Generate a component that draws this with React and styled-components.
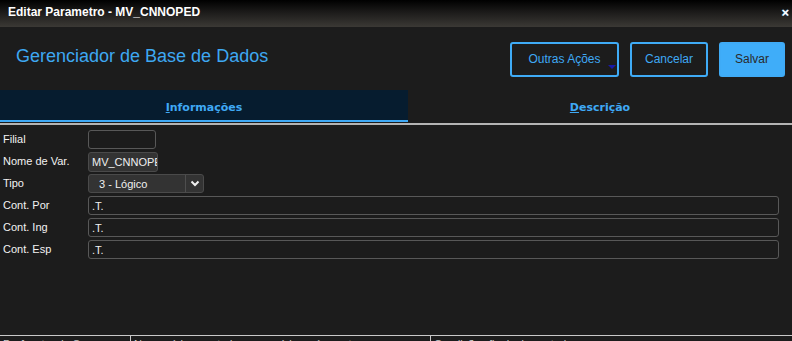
import React from "react";
import styled, { createGlobalStyle } from "styled-components";

const Global = createGlobalStyle`
  html, body { margin: 0; padding: 0; background: #1c1c1c; }
  body { font-family: "Liberation Sans", Arial, sans-serif; overflow: hidden; }
  * { box-sizing: border-box; }
`;

const Page = styled.div`
  width: 792px;
  height: 341px;
  display: flex;
  flex-direction: column;
  background: #1c1c1c;
  overflow: hidden;
`;

const Dialog = styled.div`
  height: 336px;
  display: flex;
  flex-direction: column;
  border-bottom: 1px solid #c8c8c8;
`;

const TitleBar = styled.div`
  height: 27px;
  display: flex;
  align-items: center;
  justify-content: space-between;
  padding: 0 3px 3px 8px;
  background: linear-gradient(#000 0%, #1c1b1a 45%, #3b3935 100%);
  color: #fff;
  font-weight: bold;
  font-size: 12px;
`;

const Close = styled.span`
  font-size: 13px;
  font-weight: bold;
  line-height: 1;
  color: #fff;
  text-shadow: 0 0 1px #3fa9f5;
`;

const Header = styled.div`
  height: 63px;
  display: flex;
  align-items: center;
  justify-content: space-between;
  padding: 0 7px 0 16px;
`;

const Heading = styled.h1`
  margin: 0 0 4px 0;
  font-weight: normal;
  font-size: 18px;
  color: #3ea8f2;
`;

const Actions = styled.div`
  display: flex;
  gap: 11px;
  margin-top: 1px;
`;

const Button = styled.button`
  position: relative;
  width: ${p => p.$w}px;
  height: 35px;
  padding: 0;
  border: 2px solid #3fabf6;
  border-radius: 3px;
  background: ${p => (p.$primary ? "#3fadf9" : "transparent")};
  color: ${p => (p.$primary ? "#2a2a2a" : "#3fa9f5")};
  font-family: "Liberation Sans", Arial, sans-serif;
  font-size: 12px;
  cursor: pointer;
`;

const Caret = styled.span`
  position: absolute;
  right: 1px;
  bottom: 6px;
  width: 0;
  height: 0;
  border-left: 4px solid transparent;
  border-right: 4px solid transparent;
  border-top: 4px solid #1818a8;
`;

const Tabs = styled.div`
  display: flex;
  border-bottom: 2px solid #b4b4b4;
  padding-bottom: 1px;
`;

const Tab = styled.div`
  flex: ${p => (p.$active ? "0 0 408px" : "1")};
  height: 32px;
  display: flex;
  align-items: center;
  justify-content: center;
  padding-top: 4px;
  background: ${p => (p.$active ? "#061c2f" : "transparent")};
  border-bottom: 2px solid ${p => (p.$active ? "#3fa9f5" : "transparent")};
  color: #3fa9f5;
  font-family: "DejaVu Sans", Verdana, sans-serif;
  font-weight: bold;
  font-size: 11px;
  & u { text-decoration: underline; }
`;

const Form = styled.div`
  display: flex;
  flex-direction: column;
  gap: 3px;
  padding: 5px 13px 0 3px;
`;

const Row = styled.div`
  display: flex;
  align-items: center;
  height: 19px;
`;

const Label = styled.label`
  width: 85px;
  margin-top: -1px;
  color: #f2f2f2;
  font-size: 11px;
`;

const Input = styled.div`
  width: ${p => p.$w ? `${p.$w}px` : "auto"};
  flex: ${p => (p.$w ? "none" : "1")};
  height: ${p => p.$h || 19}px;
  display: flex;
  align-items: center;
  padding: 0 3px;
  border: 1px solid ${p => (p.$ro ? "#4a4a4a" : "#585858")};
  border-radius: 3px;
  background: ${p => (p.$ro ? "#333" : "#1c1c1c")};
  color: #f0f0f0;
  font-size: 11px;
  white-space: nowrap;
  overflow: hidden;
`;

const Select = styled.div`
  width: 116px;
  height: 19px;
  display: flex;
  border: 1px solid #4a4a4a;
  border-radius: 3px;
  background: #333;
  color: #f0f0f0;
  font-size: 11px;
`;

const SelectValue = styled.div`
  flex: 1;
  display: flex;
  align-items: center;
  padding-left: 10px;
  border-right: 1px solid #4e4e4e;
`;

const SelectArrow = styled.div`
  width: 17px;
  display: flex;
  align-items: center;
  justify-content: center;
`;

const Spacer = styled.div`
  flex: 1;
`;

const BgRow = styled.div`
  height: 5px;
  display: flex;
  overflow: hidden;
  align-items: flex-start;
`;

const BgCell = styled.div`
  width: ${p => p.$w}px;
  height: 5px;
  padding: 3px 0 0 3px;
  border-left: ${p => (p.$first ? "none" : "1px solid #c8c8c8")};
  color: #c8c8c8;
  font-size: 11px;
  line-height: 11px;
  white-space: nowrap;
  overflow: hidden;
`;

export default function App() {
  return (
    <>
      <Global />
      <Page>
        <Dialog>
          <TitleBar>
            <span>Editar Parametro - MV_CNNOPED</span>
            <Close>×</Close>
          </TitleBar>
          <Header>
            <Heading>Gerenciador de Base de Dados</Heading>
            <Actions>
              <Button $w={109}>
                Outras Ações
                <Caret />
              </Button>
              <Button $w={78}>Cancelar</Button>
              <Button $primary $w={66}>Salvar</Button>
            </Actions>
          </Header>
          <Tabs>
            <Tab $active><span><u>I</u>nformações</span></Tab>
            <Tab><span><u>D</u>escrição</span></Tab>
          </Tabs>
          <Form>
            <Row>
              <Label>Filial</Label>
              <Input $w={68} />
            </Row>
            <Row>
              <Label>Nome de Var.</Label>
              <Input $w={70} $ro $h={20}>MV_CNNOPED</Input>
            </Row>
            <Row>
              <Label>Tipo</Label>
              <Select>
                <SelectValue>3 - Lógico</SelectValue>
                <SelectArrow>
                  <svg width="10" height="7" viewBox="0 0 10 7">
                    <path d="M1.5 1.5 L5 5 L8.5 1.5" fill="none" stroke="#f0f0f0" strokeWidth="2" />
                  </svg>
                </SelectArrow>
              </Select>
            </Row>
            <Row>
              <Label>Cont. Por</Label>
              <Input>.T.</Input>
            </Row>
            <Row>
              <Label>Cont. Ing</Label>
              <Input>.T.</Input>
            </Row>
            <Row>
              <Label>Cont. Esp</Label>
              <Input>.T.</Input>
            </Row>
          </Form>
          <Spacer />
        </Dialog>
        <BgRow>
          <BgCell $first $w={130}>Parâmetro do S</BgCell>
          <BgCell $w={300}>Necessário para todos os usuários, só aponta para o</BgCell>
          <BgCell $w={362}>Condições finais de controle</BgCell>
        </BgRow>
      </Page>
    </>
  );
}
